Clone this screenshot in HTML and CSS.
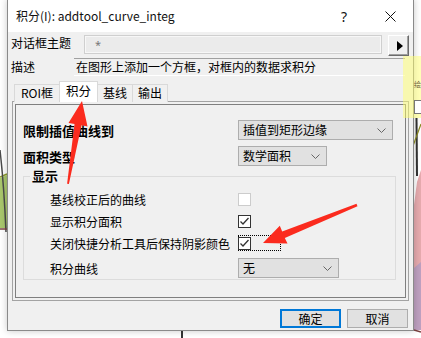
FILE: index.html
```html
<!DOCTYPE html>
<html lang="zh-CN">
<head>
    <meta charset="UTF-8">
    <title>积分(I): addtool_curve_integ</title>
    <link rel="stylesheet" href="styles.css">
</head>
<body>
<div class="screen">
    <!-- graph window behind the dialog -->
    <svg class="backdrop" width="421" height="338" viewBox="0 0 421 338">
        <rect x="0" y="0" width="421" height="338" fill="#ffffff"/>
        <polygon points="0,178 7,175 7,228 0,228" fill="#a8c66c"/>
        <line x1="0" y1="177" x2="7" y2="174" stroke="#8c9a2c" stroke-width="1.5"/>
        <path d="M0,150 Q4,185 6,232" stroke="#4a4a4a" stroke-width="1.5" fill="none"/>
        <line x1="0" y1="229" x2="7" y2="229" stroke="#7a4040" stroke-width="1.5"/>
        <polygon points="421,170 417,182 414,205 414,330 421,330" fill="#e6aaae"/>
        <polygon points="414,268 421,262 421,330 414,330" fill="#bea0c0"/>
        <line x1="414" y1="330" x2="421" y2="332" stroke="#7a4040" stroke-width="1.5"/>
        <line x1="416.5" y1="118" x2="417" y2="176" stroke="#333333" stroke-width="2"/>
        <line x1="413" y1="146" x2="421" y2="124" stroke="#8a8a20" stroke-width="1.2"/>
        <rect x="181" y="330" width="2" height="8" fill="#333333"/>
    </svg>

    <div class="dialog">
        <div class="titlebar">
            <span class="title">积分(I): addtool_curve_integ</span>
            <span class="cap-btn help">?</span>
            <span class="cap-btn close">
                <svg width="11" height="11" viewBox="0 0 11 11">
                    <path d="M0.5,0.5 L10.5,10.5 M10.5,0.5 L0.5,10.5" stroke="#111" stroke-width="1"/>
                </svg>
            </span>
        </div>

        <div class="client">
            <div class="row theme-row">
                <span class="lbl lbl-theme">对话框主题</span>
                <div class="theme-box">*</div>
                <button class="arrow-btn"><span class="tri"></span></button>
            </div>

            <div class="row desc-row">
                <span class="lbl lbl-desc">描述</span>
                <div class="desc-box">在图形上添加一个方框，对框内的数据求积分</div>
            </div>

            <div class="tabs">
                <div class="tab tab-roi">ROI框</div>
                <div class="tab active">积分</div>
                <div class="tab">基线</div>
                <div class="tab">输出</div>
            </div>

            <div class="panel">
                <div class="page">
                    <div class="field">
                        <span class="field-lbl">限制插值曲线到</span>
                        <div class="combo combo-wide">
                            <span>插值到矩形边缘</span>
                            <svg width="9" height="5" viewBox="0 0 9 5"><polyline points="0.5,0.5 4.5,4.5 8.5,0.5" fill="none" stroke="#666" stroke-width="1"/></svg>
                        </div>
                    </div>
                    <div class="field field-gap">
                        <span class="field-lbl">面积类型</span>
                        <div class="combo combo-mid">
                            <span>数学面积</span>
                            <svg width="9" height="5" viewBox="0 0 9 5"><polyline points="0.5,0.5 4.5,4.5 8.5,0.5" fill="none" stroke="#666" stroke-width="1"/></svg>
                        </div>
                    </div>

                    <fieldset class="group">
                        <legend>显示</legend>
                        <div class="opts">
                            <div class="opt">
                                <span>基线校正后的曲线</span>
                                <span class="check disabled"></span>
                            </div>
                            <div class="opt">
                                <span>显示积分面积</span>
                                <span class="check">
                                    <svg width="11" height="11" viewBox="0 0 11 11"><polyline points="1.5,5.5 4,8 9.5,2" fill="none" stroke="#333" stroke-width="1.3"/></svg>
                                </span>
                            </div>
                            <div class="opt">
                                <span>关闭快捷分析工具后保持阴影颜色</span>
                                <span class="focus">
                                    <span class="check">
                                        <svg width="11" height="11" viewBox="0 0 11 11"><polyline points="1.5,5.5 4,8 9.5,2" fill="none" stroke="#333" stroke-width="1.3"/></svg>
                                    </span>
                                </span>
                            </div>
                            <div class="opt opt-combo">
                                <span>积分曲线</span>
                                <div class="combo combo-none">
                                    <span>无</span>
                                    <svg width="9" height="5" viewBox="0 0 9 5"><polyline points="0.5,0.5 4.5,4.5 8.5,0.5" fill="none" stroke="#666" stroke-width="1"/></svg>
                                </div>
                            </div>
                        </div>
                    </fieldset>
                </div>
            </div>

            <div class="actions">
                <button class="btn default">确定</button>
                <button class="btn">取消</button>
            </div>
        </div>
    </div>

    <!-- tooltip of the graph window, partly over the dialog -->
    <div class="tooltip">
        <span class="tip-glyph">绘</span>
        <span class="tip-box"></span>
    </div>

    <!-- red annotation arrows -->
    <svg class="marks" width="421" height="338" viewBox="0 0 421 338">
        <polygon fill="#fb2b1e" points="82,101 87.5,126.5 81.5,125.3 68.9,184 67.1,183.8 74.5,124.1 68.5,123"/>
        <polygon fill="#fb2b1e" points="263,243 287.5,243.5 284.8,237.9 357.5,206.2 356.5,203.8 282.2,231.4 279.8,225.8"/>
    </svg>
</div>
</body>
</html>
```

FILE: styles.css
```css
body {
    margin: 0;
    font-family: "Noto Sans CJK SC", "Noto Sans", sans-serif;
    font-size: 12px;
    color: #000;
}
.screen {
    position: relative;
    width: 421px;
    height: 338px;
    overflow: hidden;
    background: #fff;
}
.backdrop {
    position: absolute;
    left: 0;
    top: 0;
}
.dialog {
    position: absolute;
    left: 7px;
    top: -1px;
    width: 405px;
    height: 330px;
    border: 1px solid #8a8a8a;
    box-shadow: 0 0 7px rgba(0, 0, 0, 0.22);
    background: #f0f0f0;
    z-index: 1;
}
.titlebar {
    height: 32px;
    background: #fff;
    display: flex;
    align-items: center;
    padding-left: 8px;
}
.title {
    font-size: 12px;
    line-height: 16px;
    color: #111;
}
.cap-btn {
    width: 46px;
    height: 32px;
    display: flex;
    align-items: center;
    justify-content: center;
}
.help {
    margin-left: auto;
    font-family: "Noto Sans", sans-serif;
    font-size: 14px;
    color: #111;
}
.client {
    height: 298px;
    padding-top: 3px;
    box-sizing: border-box;
}
.row {
    display: flex;
    padding-left: 3px;
}
.lbl {
    font-size: 12px;
}
.theme-row {
    height: 21px;
}
.lbl-theme {
    width: 73px;
    line-height: 14px;
    margin-top: 1px;
}
.theme-box {
    width: 298px;
    height: 19px;
    box-sizing: border-box;
    border: 1px solid #cfcfcf;
    box-shadow: inset 0 0 0 1px #f7f7f7;
    background: #ebebeb;
    color: #777;
    padding-left: 10px;
    line-height: 18px;
    font-family: "Noto Sans", sans-serif;
    font-size: 11px;
}
.arrow-btn {
    margin-left: 6px;
    width: 21px;
    height: 21px;
    box-sizing: border-box;
    padding: 0;
    border: 1px solid;
    border-color: #ffffff #6b6b6b #6b6b6b #ffffff;
    box-shadow: inset -1px -1px 0 #a0a0a0;
    background: #f0f0f0;
    display: flex;
    align-items: center;
    justify-content: center;
}
.tri {
    width: 0;
    height: 0;
    margin-left: 2px;
    border-top: 5px solid transparent;
    border-bottom: 5px solid transparent;
    border-left: 6px solid #000;
}
.desc-row {
    margin-top: 2px;
    height: 18px;
}
.lbl-desc {
    width: 63px;
    line-height: 18px;
}
.desc-box {
    width: 331px;
    height: 18px;
    box-sizing: border-box;
    border-top: 1px solid #a0a0a0;
    border-bottom: 1px solid #ffffff;
    padding-left: 2px;
    line-height: 16px;
}
.tabs {
    display: flex;
    align-items: flex-end;
    height: 21px;
    margin-top: 5px;
    margin-bottom: -1px;
    padding-left: 6px;
    position: relative;
    z-index: 1;
}
.tab {
    height: 18px;
    box-sizing: border-box;
    border: 1px solid #d9d9d9;
    border-bottom: none;
    background: #f0f0f0;
    line-height: 16px;
    padding: 0 5px;
    margin-left: -1px;
    white-space: nowrap;
}
.tab-roi {
    margin-left: 0;
    padding: 0 6px;
}
.tab.active {
    height: 21px;
    background: #fff;
    line-height: 18px;
    padding: 0 6px;
    font-size: 12.5px;
}
.panel {
    margin-left: 4px;
    width: 397px;
    height: 200px;
    box-sizing: border-box;
    border: 1px solid #a3a3a3;
    padding: 2px;
}
.page {
    height: 194px;
    box-sizing: border-box;
    border: 1px solid #7f7f7f;
    padding: 15px 0 0 7px;
}
.field {
    display: grid;
    grid-template-columns: 215px auto;
    align-items: center;
    height: 20px;
}
.field-gap {
    margin-top: 6px;
}
.field-lbl {
    font-weight: bold;
    font-size: 13px;
}
.combo {
    display: flex;
    align-items: center;
    justify-content: space-between;
    height: 20px;
    box-sizing: border-box;
    border: 1px solid #adadad;
    background: #e1e1e1;
    padding: 0 6px 0 4px;
    line-height: 18px;
}
.combo-wide {
    width: 155px;
}
.combo-mid {
    width: 89px;
}
.combo-none {
    width: 101px;
}
.group {
    margin: 3px 0 0 0;
    width: 373px;
    box-sizing: border-box;
    border: 1px solid #dcdcdc;
    padding: 5px 0 1px 6px;
    min-width: 0;
}
.group legend {
    font-weight: bold;
    font-size: 13px;
    line-height: 14px;
    padding: 0 2px;
}
.opts {
    padding-left: 20px;
}
.opt {
    display: grid;
    grid-template-columns: 188px auto;
    align-items: center;
    height: 22px;
}
.opt-combo {
    height: 20px;
    margin-top: 4px;
}
.check {
    width: 13px;
    height: 13px;
    box-sizing: border-box;
    border: 1px solid #333;
    background: #fff;
    display: flex;
    align-items: center;
    justify-content: center;
}
.check.disabled {
    border-color: #cccccc;
}
.focus {
    width: 43px;
    height: 16px;
    box-sizing: border-box;
    border: 1px dotted #000;
    display: flex;
    align-items: center;
}
.focus .check {
    margin-left: -1px;
}
.actions {
    display: flex;
    justify-content: flex-end;
    gap: 6px;
    margin-top: 8px;
    padding-right: 5px;
}
.btn {
    width: 61px;
    height: 19px;
    box-sizing: border-box;
    padding: 0;
    border: 1px solid #adadad;
    background: #e1e1e1;
    font-family: inherit;
    font-size: 12px;
    line-height: 16px;
    color: #000;
}
.btn.default {
    border: 2px solid #0078d7;
}
.tooltip {
    position: absolute;
    left: 403px;
    top: 56px;
    width: 30px;
    height: 62px;
    background: rgba(255, 255, 110, 0.5);
    z-index: 2;
}
.tip-glyph {
    position: absolute;
    left: 11px;
    top: 24px;
    font-size: 7px;
    line-height: 8px;
    color: #6a5a3a;
}
.tip-box {
    position: absolute;
    left: 11px;
    top: 44px;
    width: 12px;
    height: 12px;
    border: 1px solid #777;
    background: #fff;
}
.marks {
    position: absolute;
    left: 0;
    top: 0;
    z-index: 3;
}
```
